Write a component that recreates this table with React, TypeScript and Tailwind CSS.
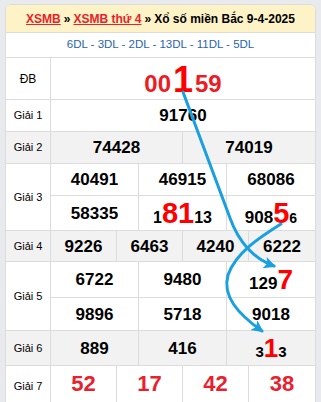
import React from "react";

const RED = "text-[#ec1c24]";

function Label({ children }: { children: React.ReactNode }) {
  return (
    <div className="flex w-[45px] shrink-0 items-center justify-center border-r border-[#dcdcdc] text-[11px] text-black">
      {children}
    </div>
  );
}

function Num({ children, last }: { children: React.ReactNode; last?: boolean }) {
  return (
    <div
      className={`flex items-center justify-center text-[17px] font-bold leading-none text-black ${
        last ? "" : "border-r border-[#dcdcdc]"
      }`}
    >
      <span className="flex items-baseline">{children}</span>
    </div>
  );
}

const Hi = ({ children, size }: { children: React.ReactNode; size: string }) => (
  <span className={`${size} leading-none text-[#ff0000]`}>{children}</span>
);

export default function App() {
  return (
    <div
      className="relative h-[402px] w-[321px] overflow-hidden bg-[#e8eaed] pt-[4px]"
      style={{ fontFamily: '"Liberation Sans", Arial, sans-serif' }}
    >
      <div className="ml-[5px] w-[311px] overflow-hidden rounded-t-[6px] border border-[#dcdcdc] bg-white">
        {/* header */}
        <div className="flex h-[28px] items-center justify-center border-b border-[#dcdcdc] bg-[#fdf3c7] text-[12px] font-bold text-black">
          <span className="text-[#e8222a] underline">XSMB</span>
          <span className="mx-[3px]">»</span>
          <span className="text-[#e8222a] underline">XSMB thứ 4</span>
          <span className="mx-[3px]">»</span>
          <span>Xổ số miền Bắc 9-4-2025</span>
        </div>

        {/* dac biet codes */}
        <div className="flex h-[25px] items-center justify-center border-b border-[#dcdcdc] text-[11.5px] text-[#1f66b0]">
          6DL - 3DL - 2DL - 13DL - 11DL - 5DL
        </div>

        {/* DB */}
        <div className="flex h-[42px] border-b border-[#dcdcdc]">
          <Label>
            <span className="text-[12px]">ĐB</span>
          </Label>
          <div className="flex flex-1 items-center justify-center pt-[2px]">
            <span className={`flex items-baseline font-bold leading-none ${RED}`}>
              <span className="text-[24px]">00</span>
              <span className="mx-[2px] text-[36px] text-[#ff0000]">1</span>
              <span className="text-[24px]">59</span>
            </span>
          </div>
        </div>

        {/* G1 */}
        <div className="flex h-[32px] border-b border-[#dcdcdc]">
          <Label>Giải 1</Label>
          <div className="grid flex-1 grid-cols-1">
            <Num last>91760</Num>
          </div>
        </div>

        {/* G2 */}
        <div className="flex h-[32px] border-b border-[#dcdcdc] bg-[#f2f2f2]">
          <Label>Giải 2</Label>
          <div className="grid flex-1 grid-cols-2">
            <Num>74428</Num>
            <Num last>74019</Num>
          </div>
        </div>

        {/* G3 */}
        <div className="flex border-b border-[#dcdcdc]">
          <Label>Giải 3</Label>
          <div className="flex flex-1 flex-col">
            <div className="grid h-[32px] grid-cols-3 border-b border-[#dcdcdc]">
              <Num>40491</Num>
              <Num>46915</Num>
              <Num last>68086</Num>
            </div>
            <div className="grid h-[34px] grid-cols-3">
              <Num>58335</Num>
              <Num>
                <span className="text-[16px]">1</span>
                <Hi size="text-[29px]">81</Hi>
                <span className="text-[16px]">13</span>
              </Num>
              <Num last>
                <span>908</span>
                <Hi size="text-[29px]">5</Hi>
                <span className="text-[14px]">6</span>
              </Num>
            </div>
          </div>
        </div>

        {/* G4 */}
        <div className="flex h-[31px] border-b border-[#dcdcdc] bg-[#f2f2f2]">
          <Label>Giải 4</Label>
          <div className="grid flex-1 grid-cols-4">
            <Num>9226</Num>
            <Num>6463</Num>
            <Num>4240</Num>
            <Num last>6222</Num>
          </div>
        </div>

        {/* G5 */}
        <div className="flex border-b border-[#dcdcdc]">
          <Label>Giải 5</Label>
          <div className="flex flex-1 flex-col">
            <div className="grid h-[36px] grid-cols-3 border-b border-[#dcdcdc]">
              <Num>6722</Num>
              <Num>9480</Num>
              <Num last>
                <span>129</span>
                <Hi size="text-[28px]">7</Hi>
              </Num>
            </div>
            <div className="grid h-[32px] grid-cols-3">
              <Num>9896</Num>
              <Num>5718</Num>
              <Num last>9018</Num>
            </div>
          </div>
        </div>

        {/* G6 */}
        <div className="flex h-[35px] border-b border-[#dcdcdc] bg-[#f2f2f2]">
          <Label>Giải 6</Label>
          <div className="grid flex-1 grid-cols-3">
            <Num>889</Num>
            <Num>416</Num>
            <Num last>
              <span className="text-[15px]">3</span>
              <Hi size="text-[26px]">1</Hi>
              <span className="text-[15px]">3</span>
            </Num>
          </div>
        </div>

        {/* G7 */}
        <div className="flex h-[40px]">
          <Label>Giải 7</Label>
          <div className="grid flex-1 grid-cols-4 pb-[4px]">
            {["52", "17", "42", "38"].map((n, i) => (
              <div
                key={n}
                className={`flex items-center justify-center text-[22px] font-bold leading-none text-[#e8212e] ${
                  i < 3 ? "border-r border-[#dcdcdc]" : ""
                }`}
              >
                {n}
              </div>
            ))}
          </div>
        </div>
      </div>

      {/* arrows over the table */}
      <svg
        className="pointer-events-none absolute left-0 top-0"
        width="321"
        height="402"
        viewBox="0 0 321 402"
      >
        <defs>
          <marker
            id="ah"
            markerUnits="userSpaceOnUse"
            markerWidth="14"
            markerHeight="14"
            refX="10"
            refY="6"
            orient="auto"
          >
            <path d="M0,0 L12,6 L0,12 L3,6 z" fill="#1a9fe0" />
          </marker>
        </defs>
        <path
          d="M183,92 L230,218 C238,240 252,258 274,266"
          fill="none"
          stroke="#1a9fe0"
          strokeWidth="3"
          strokeLinecap="round"
          markerEnd="url(#ah)"
        />
        <path
          d="M281,224 C262,236 236,252 228,275 C222,296 238,314 262,331"
          fill="none"
          stroke="#1a9fe0"
          strokeWidth="3"
          strokeLinecap="round"
          markerEnd="url(#ah)"
        />
      </svg>
    </div>
  );
}
